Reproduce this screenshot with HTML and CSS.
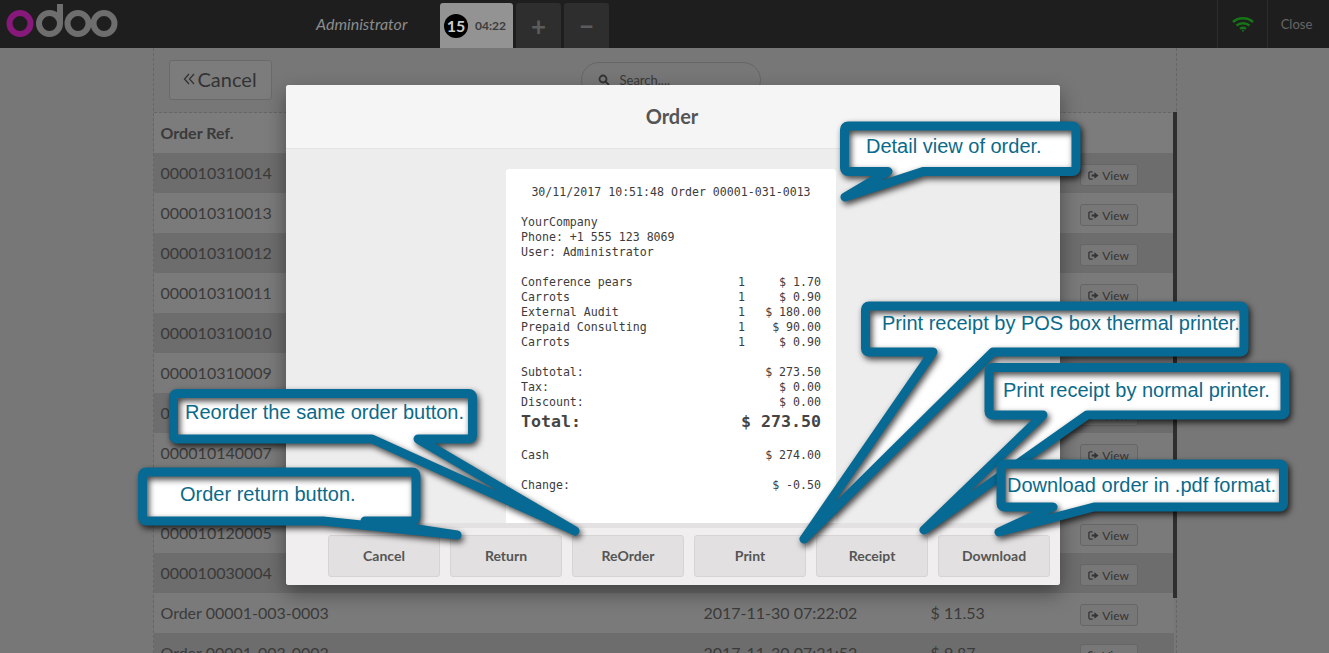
FILE: index.html
```html
<!DOCTYPE html>
<html lang="en">
<head>
    <meta charset="UTF-8">
    <title>Order</title>
    <link rel="stylesheet" href="styles.css">
</head>
<body>

    <svg class="defs" width="0" height="0">
        <symbol id="iconView" viewBox="0 0 12 12">
            <path d="M5 2H2.500Q1 2 1 3.500v5Q1 10 2.500 10H5" fill="none" stroke="currentColor" stroke-width="1.400"/>
            <path d="M4 4.800h3V2.400L11.400 6 7 9.600V7.200H4z" fill="currentColor"/>
        </symbol>
    </svg>

    <header class="topbar">
        <svg class="logo" width="120" height="48" viewBox="0 0 120 48">
            <g fill="none" stroke-width="6">
                <circle cx="20" cy="23.500" r="10.500" stroke="#86197a"/>
                <circle cx="49.500" cy="23.500" r="10.500" stroke="#6e6e6e"/>
                <circle cx="78" cy="23.500" r="10.500" stroke="#6e6e6e"/>
                <circle cx="104" cy="23.500" r="10.500" stroke="#6e6e6e"/>
            </g>
            <path d="M57 4h6v20H57z" fill="#6e6e6e"/>
        </svg>
        <span class="username">Administrator</span>
        <div class="tabs">
            <div class="tab tab-active"><span class="tab-num">15</span><span class="tab-time">04:22</span></div>
            <div class="tab tab-btn">+</div>
            <div class="tab tab-btn">&minus;</div>
        </div>
        <div class="status">
            <div class="status-item status-wifi">
                <svg width="22" height="16" viewBox="0 0 22 16" fill="none" stroke="#167516" stroke-width="2.600">
                    <path d="M1 6C6.500 1 15.500 1 21 6"/>
                    <path d="M4.500 9.500C8 6.500 14 6.500 17.500 9.500"/>
                    <path d="M8 12.800C9.800 11.500 12.200 11.500 14 12.800"/>
                    <circle cx="11" cy="14.800" r="1" fill="#167516" stroke="none"/>
                </svg>
            </div>
            <div class="status-item status-close">Close</div>
        </div>
    </header>

    <main class="screen">
        <div class="toolbar">
            <button class="cancel-btn" type="button">
                <svg width="12" height="14" viewBox="0 0 12 14" fill="none" stroke="currentColor" stroke-width="1.300"><path d="M6 2 1.500 7 6 12M11 2 6.500 7 11 12"/></svg>
                Cancel
            </button>
            <div class="search">
                <svg width="12" height="12" viewBox="0 0 12 12" fill="none" stroke="#333" stroke-width="1.800"><circle cx="5" cy="5" r="3.500"/><path d="M7.500 7.500 11 11"/></svg>
                <span>Search....</span>
            </div>
        </div>
        <table class="orders">
            <thead>
                <tr><th class="col-ref">Order Ref.</th><th class="col-date">Order Date</th><th class="col-total">Total</th><th></th></tr>
            </thead>
            <tbody>
                <tr><td>000010310014</td><td>2017-11-30 10:52:10</td><td>$ 273.50</td><td><a class="view-btn"><svg width="11" height="11"><use href="#iconView"/></svg>View</a></td></tr>
                <tr><td>000010310013</td><td>2017-11-30 10:51:48</td><td>$ 273.50</td><td><a class="view-btn"><svg width="11" height="11"><use href="#iconView"/></svg>View</a></td></tr>
                <tr><td>000010310012</td><td>2017-11-30 10:48:21</td><td>$ 12.40</td><td><a class="view-btn"><svg width="11" height="11"><use href="#iconView"/></svg>View</a></td></tr>
                <tr><td>000010310011</td><td>2017-11-30 10:47:05</td><td>$ 8.15</td><td><a class="view-btn"><svg width="11" height="11"><use href="#iconView"/></svg>View</a></td></tr>
                <tr><td>000010310010</td><td>2017-11-30 10:45:33</td><td>$ 19.30</td><td><a class="view-btn"><svg width="11" height="11"><use href="#iconView"/></svg>View</a></td></tr>
                <tr><td>000010310009</td><td>2017-11-30 10:44:12</td><td>$ 6.75</td><td><a class="view-btn"><svg width="11" height="11"><use href="#iconView"/></svg>View</a></td></tr>
                <tr><td>000010140008</td><td>2017-11-30 08:12:40</td><td>$ 4.20</td><td><a class="view-btn"><svg width="11" height="11"><use href="#iconView"/></svg>View</a></td></tr>
                <tr><td>000010140007</td><td>2017-11-30 08:10:18</td><td>$ 15.60</td><td><a class="view-btn"><svg width="11" height="11"><use href="#iconView"/></svg>View</a></td></tr>
                <tr><td>000010130006</td><td>2017-11-30 07:58:02</td><td>$ 9.95</td><td><a class="view-btn"><svg width="11" height="11"><use href="#iconView"/></svg>View</a></td></tr>
                <tr><td>000010120005</td><td>2017-11-30 07:41:27</td><td>$ 22.10</td><td><a class="view-btn"><svg width="11" height="11"><use href="#iconView"/></svg>View</a></td></tr>
                <tr><td>000010030004</td><td>2017-11-30 07:23:16</td><td>$ 7.80</td><td><a class="view-btn"><svg width="11" height="11"><use href="#iconView"/></svg>View</a></td></tr>
                <tr><td>Order 00001-003-0003</td><td>2017-11-30 07:22:02</td><td>$ 11.53</td><td><a class="view-btn"><svg width="11" height="11"><use href="#iconView"/></svg>View</a></td></tr>
                <tr><td>Order 00001-003-0002</td><td>2017-11-30 07:21:52</td><td>$ 9.87</td><td><a class="view-btn"><svg width="11" height="11"><use href="#iconView"/></svg>View</a></td></tr>
            </tbody>
        </table>
        <div class="scrollbar"></div>
    </main>

    <section class="modal">
        <h3 class="modal-title">Order</h3>
        <div class="modal-body">
            <div class="receipt">
                <div class="receipt-head">30/11/2017 10:51:48 Order 00001-031-0013</div>
                <div class="receipt-block">
                    <div>YourCompany</div>
                    <div>Phone: +1 555 123 8069</div>
                    <div>User: Administrator</div>
                </div>
                <div class="receipt-block">
                    <div class="line"><span>Conference pears</span><span>1</span><span class="amount">$ 1.70</span></div>
                    <div class="line"><span>Carrots</span><span>1</span><span class="amount">$ 0.90</span></div>
                    <div class="line"><span>External Audit</span><span>1</span><span class="amount">$ 180.00</span></div>
                    <div class="line"><span>Prepaid Consulting</span><span>1</span><span class="amount">$ 90.00</span></div>
                    <div class="line"><span>Carrots</span><span>1</span><span class="amount">$ 0.90</span></div>
                </div>
                <div class="receipt-block">
                    <div class="sum"><span>Subtotal:</span><span>$ 273.50</span></div>
                    <div class="sum"><span>Tax:</span><span>$ 0.00</span></div>
                    <div class="sum"><span>Discount:</span><span>$ 0.00</span></div>
                    <div class="sum sum-total"><span>Total:</span><span>$ 273.50</span></div>
                </div>
                <div class="receipt-block">
                    <div class="sum"><span>Cash</span><span>$ 274.00</span></div>
                </div>
                <div class="receipt-block">
                    <div class="sum"><span>Change:</span><span>$ -0.50</span></div>
                </div>
            </div>
        </div>
        <div class="modal-footer">
            <button class="footer-btn" type="button">Cancel</button>
            <button class="footer-btn" type="button">Return</button>
            <button class="footer-btn" type="button">ReOrder</button>
            <button class="footer-btn" type="button">Print</button>
            <button class="footer-btn" type="button">Receipt</button>
            <button class="footer-btn" type="button">Download</button>
        </div>
    </section>

    <!-- annotations drawn on top of the screenshot -->
    <svg class="callouts" width="1329" height="653" viewBox="0 0 1329 653">
        <g class="callout">
            <path class="callout-fill" d="M844.500 126H1076V171.500H923L845 197L888 171.500H844.500Z"/>
            <path class="callout-line" d="M848 126H1072.500A3.500 3.500 0 0 1 1076 129.500V168A3.500 3.500 0 0 1 1072.500 171.500H923L845 197L888 171.500H848A3.500 3.500 0 0 1 844.500 168V129.500A3.500 3.500 0 0 1 848 126Z"/>
            <text x="866" y="153">Detail view of order.</text>
        </g>
        <g class="callout">
            <path class="callout-fill" d="M865.500 306H1244V352H993L804 539L933 352H865.500Z"/>
            <path class="callout-line" d="M869 306H1240.500A3.500 3.500 0 0 1 1244 309.500V348.500A3.500 3.500 0 0 1 1240.500 352H993L804 539L933 352H869A3.500 3.500 0 0 1 865.500 348.500V309.500A3.500 3.500 0 0 1 869 306Z"/>
            <text x="882" y="330">Print receipt by POS box thermal printer.</text>
        </g>
        <g class="callout">
            <path class="callout-fill" d="M989 367.500H1285V415H1087L924 530L1043 415H989Z"/>
            <path class="callout-line" d="M992.500 367.500H1281.500A3.500 3.500 0 0 1 1285 371V411.500A3.500 3.500 0 0 1 1281.500 415H1087L924 530L1043 415H992.500A3.500 3.500 0 0 1 989 411.500V371A3.500 3.500 0 0 1 992.500 367.500Z"/>
            <text x="1003" y="397">Print receipt by normal printer.</text>
        </g>
        <g class="callout">
            <path class="callout-fill" d="M1001 464H1283.500V507H1094L999 532L1053 507H1001Z"/>
            <path class="callout-line" d="M1004.500 464H1280A3.500 3.500 0 0 1 1283.500 467.500V503.500A3.500 3.500 0 0 1 1280 507H1094L999 532L1053 507H1004.500A3.500 3.500 0 0 1 1001 503.500V467.500A3.500 3.500 0 0 1 1004.500 464Z"/>
            <text x="1007" y="492">Download order in .pdf format.</text>
        </g>
        <g class="callout">
            <path class="callout-fill" d="M173.500 393.500H472.500V439H418L575 531L372 439H173.500Z"/>
            <path class="callout-line" d="M177 393.500H469A3.500 3.500 0 0 1 472.500 397V435.500A3.500 3.500 0 0 1 469 439H418L575 531L372 439H177A3.500 3.500 0 0 1 173.500 435.500V397A3.500 3.500 0 0 1 177 393.500Z"/>
            <text x="185" y="419">Reorder the same order button.</text>
        </g>
        <g class="callout">
            <path class="callout-fill" d="M142.500 472H416V521H365L457 535L323 521H142.500Z"/>
            <path class="callout-line" d="M146 472H412.500A3.500 3.500 0 0 1 416 475.500V517.500A3.500 3.500 0 0 1 412.500 521H365L457 535L323 521H146A3.500 3.500 0 0 1 142.500 517.500V475.500A3.500 3.500 0 0 1 146 472Z"/>
            <text x="180" y="501">Order return button.</text>
        </g>
    </svg>

</body>
</html>
```

FILE: styles.css
```css
html, body {
    margin: 0;
    padding: 0;
    height: 653px;
    overflow: hidden;
}

body {
    position: relative;
    font-family: 'Lato', 'Open Sans', sans-serif;
    background-color: #787777;
    color: #333;
}

.defs {
    position: absolute;
}

/* top bar */
.topbar {
    display: flex;
    align-items: stretch;
    height: 48px;
    background-color: #1e1e1e;
}

.logo {
    flex: none;
}

.username {
    margin-left: 196px;
    width: 124px;
    line-height: 48px;
    font-size: 16px;
    font-style: italic;
    color: #8c8c8c;
}

.tabs {
    display: flex;
    gap: 3px;
    padding-top: 3px;
}

.tab {
    display: flex;
    align-items: center;
    justify-content: center;
    border-radius: 3px 3px 0 0;
}

.tab-active {
    width: 73px;
    gap: 7px;
    padding-left: 4px;
    box-sizing: border-box;
    justify-content: flex-start;
    background-color: #939393;
}

.tab-num {
    width: 24px;
    height: 24px;
    border-radius: 50%;
    background-color: #000;
    color: #ccc;
    font-size: 16px;
    font-weight: bold;
    line-height: 24px;
    text-align: center;
}

.tab-time {
    font-size: 12px;
    font-weight: bold;
    color: #3c3c3c;
}

.tab-btn {
    width: 45px;
    background-color: #2e2e2e;
    color: #5c5c5c;
    font-size: 26px;
    font-weight: bold;
}

.status {
    display: flex;
    margin-left: auto;
}

.status-item {
    display: flex;
    align-items: center;
    justify-content: center;
    box-sizing: border-box;
    border-left: 1px solid #2c2c2c;
}

.status-wifi {
    width: 50px;
}

.status-close {
    width: 62px;
    padding-right: 4px;
    font-size: 13px;
    color: #666;
}

/* order list behind the dialog */
.screen {
    position: relative;
    width: 1024px;
    margin: 0 auto;
    height: 605px;
    box-sizing: border-box;
    border-left: 1px dashed #666;
    border-right: 1px dashed #666;
}

.toolbar {
    position: relative;
    height: 64px;
    border-bottom: 1px dashed #666;
}

.cancel-btn {
    display: flex;
    align-items: center;
    gap: 3px;
    position: absolute;
    left: 15px;
    top: 12px;
    width: 103px;
    height: 40px;
    padding: 0 0 2px 13px;
    border: 1px solid #6a6a6a;
    border-radius: 3px;
    background-color: #7c7c7c;
    font-family: inherit;
    font-size: 20px;
    color: #333;
}

.search {
    display: flex;
    align-items: center;
    gap: 10px;
    position: absolute;
    left: 427px;
    top: 14px;
    width: 180px;
    height: 36px;
    box-sizing: border-box;
    padding-left: 16px;
    border: 1px solid #666;
    border-radius: 18px;
    background-color: #787777;
    font-size: 13px;
    color: #3a3a3a;
}

.orders {
    width: 1020px;
    border-collapse: collapse;
    table-layout: fixed;
    font-size: 16px;
}

.orders th,
.orders td {
    box-sizing: border-box;
    height: 40px;
    padding: 0 0 2px 7px;
    text-align: left;
    color: #3a3a3a;
}

.orders td:last-child {
    padding: 4px 0 0 7px;
}

.orders th {
    background-color: #7c7c7c;
    font-weight: bold;
}

.col-ref { width: 543px; }
.col-date { width: 227px; }
.col-total { width: 149px; }

.orders tbody tr:nth-child(odd) td {
    background-color: #6d6d6d;
}

.orders tbody tr:nth-child(even) td {
    background-color: #7a7a7a;
}

.view-btn {
    display: inline-flex;
    align-items: center;
    justify-content: center;
    gap: 3px;
    width: 58px;
    height: 22px;
    box-sizing: border-box;
    border: 1px solid #666;
    border-radius: 3px;
    background-color: #787777;
    font-size: 12px;
    color: #333;
    vertical-align: middle;
}

.scrollbar {
    position: absolute;
    left: 1019px;
    top: 64px;
    width: 4px;
    height: 486px;
    background-color: #2e2e2e;
}

/* dialog */
.modal {
    position: absolute;
    left: 286px;
    top: 85px;
    width: 774px;
    height: 500px;
    display: flex;
    flex-direction: column;
    border-radius: 3px;
    background-color: #eeeded;
    box-shadow: 0 8px 20px rgba(0, 0, 0, 0.4);
}

.modal-title {
    flex: none;
    margin: 0;
    height: 63px;
    padding-right: 2px;
    border-bottom: 1px solid #e4e2e2;
    border-radius: 3px 3px 0 0;
    background-color: #f6f5f5;
    font-size: 20px;
    line-height: 63px;
    text-align: center;
    color: #555;
}

.modal-body {
    flex: 1;
    display: flex;
    justify-content: center;
    min-height: 0;
    padding: 20px 4px 0 0;
}

.receipt {
    width: 330px;
    height: 354px;
    box-sizing: border-box;
    padding: 16px 15px 0;
    border-radius: 3px 3px 0 0;
    background-color: #fff;
    font-family: 'DejaVu Sans Mono', monospace;
    font-size: 11.6px;
    line-height: 15px;
    color: #3c3c3c;
}

.receipt-head {
    text-align: center;
}

.receipt-block {
    margin-top: 15px;
}

.line {
    display: grid;
    grid-template-columns: 217px 20px 1fr;
}

.amount {
    text-align: right;
}

.sum {
    display: flex;
    justify-content: space-between;
}

.sum-total {
    font-size: 16.6px;
    font-weight: bold;
    line-height: 23px;
    color: #444;
}

.modal-footer {
    flex: none;
    display: flex;
    justify-content: flex-end;
    gap: 10px;
    box-sizing: border-box;
    height: 62px;
    padding: 7px 10px 0 0;
    border-top: 5px solid #e3e1e1;
    background-color: #f0eeee;
    border-radius: 0 0 3px 3px;
}

.footer-btn {
    width: 112px;
    height: 42px;
    padding: 0 0 2px;
    border: 1px solid #d6d4d4;
    border-radius: 3px;
    background-color: #e2e0e0;
    font-family: inherit;
    font-size: 14px;
    font-weight: bold;
    color: #555;
}

/* callouts */
.callouts {
    position: absolute;
    left: 0;
    top: 0;
}

.callout-fill {
    fill: #fff;
}

.callout-line {
    fill: none;
    stroke: #066a94;
    stroke-width: 9;
    stroke-linejoin: round;
    filter: drop-shadow(2px 3px 3px rgba(0, 0, 0, 0.75));
}

.callout text {
    font-family: 'Liberation Sans', Arial, sans-serif;
    font-size: 20px;
    fill: #0b6a8a;
}
```
